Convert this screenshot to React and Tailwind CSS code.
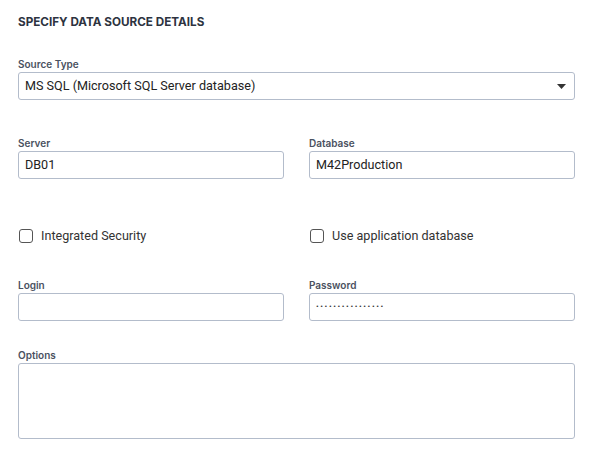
import React from "react";

function Label({ children }) {
  return (
    <div
      className="text-[10px] leading-[12px] font-semibold text-[#4a5160] mb-[2px]"
      style={{ fontFamily: "Inter, Roboto, sans-serif" }}
    >
      {children}
    </div>
  );
}

function Input({ value, password }) {
  return (
    <div className="h-[28px] border border-[#b3bccb] rounded-[3px] bg-white flex items-center px-[6px] text-[12.6px] text-[#222]">
      {password ? (
        <span className="text-[8px] tracking-[1.6px] text-[#333] -mt-[1px]">••••••••••••••••</span>
      ) : (
        value
      )}
    </div>
  );
}

function Checkbox({ label }) {
  return (
    <div className="flex items-center gap-[8px] h-[16px]">
      <div className="w-[14px] h-[14px] border border-[#555] rounded-[3px] bg-white ml-[1px]" />
      <span className="text-[12.6px] text-[#333]">{label}</span>
    </div>
  );
}

export default function App() {
  return (
    <div
      className="w-[591px] h-[461px] bg-white pl-[18px] pr-[16px] pt-[13px]"
      style={{ fontFamily: "Roboto, 'Liberation Sans', sans-serif" }}
    >
      <div
        className="text-[11.7px] leading-[18px] font-bold text-[#2d3340]"
        style={{ fontFamily: "Inter, Roboto, sans-serif" }}
      >
        SPECIFY DATA SOURCE DETAILS
      </div>

      <div className="mt-[27px]">
        <Label>Source Type</Label>
        <div className="h-[28px] border border-[#b3bccb] rounded-[3px] bg-white flex items-center justify-between pl-[6px] pr-[8px] text-[12.6px] text-[#222]">
          <span>MS SQL (Microsoft SQL Server database)</span>
          <svg width="9" height="5" viewBox="0 0 9 5">
            <path d="M0 0 L9 0 L4.5 5 Z" fill="#333" />
          </svg>
        </div>
      </div>

      <div className="grid grid-cols-2 gap-x-[25px] mt-[37px]">
        <div>
          <Label>Server</Label>
          <Input value="DB01" />
        </div>
        <div>
          <Label>Database</Label>
          <Input value="M42Production" />
        </div>
      </div>

      <div className="grid grid-cols-2 gap-x-[25px] mt-[49px]">
        <Checkbox label="Integrated Security" />
        <Checkbox label="Use application database" />
      </div>

      <div className="grid grid-cols-2 gap-x-[25px] mt-[35px]">
        <div>
          <Label>Login</Label>
          <Input value="" />
        </div>
        <div>
          <Label>Password</Label>
          <Input password />
        </div>
      </div>

      <div className="mt-[28px]">
        <Label>Options</Label>
        <div className="h-[76px] border border-[#b3bccb] rounded-[3px] bg-white" />
      </div>
    </div>
  );
}
